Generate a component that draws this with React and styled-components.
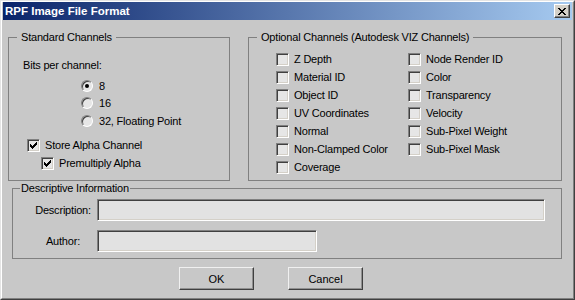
import React from "react";
import styled, { createGlobalStyle } from "styled-components";

const GlobalStyle = createGlobalStyle`
  html, body {
    margin: 0;
    padding: 0;
    background: #c8c8c8;
  }
  body {
    font-family: "Liberation Sans", Arial, sans-serif;
    font-size: 11px;
    letter-spacing: -0.2px;
    color: #000;
  }
`;

const standardRadios = [
  { id: "8", label: "8", checked: true, top: 3, height: 17 },
  { id: "16", label: "16", checked: false, top: 0, height: 18 },
  { id: "32", label: "32, Floating Point", checked: false, top: 0, height: 18 },
];

const optionalChannels = [
  "Z Depth",
  "Material ID",
  "Object ID",
  "UV Coordinates",
  "Normal",
  "Non-Clamped Color",
  "Coverage",
  "Node Render ID",
  "Color",
  "Transparency",
  "Velocity",
  "Sub-Pixel Weight",
  "Sub-Pixel Mask",
];

const Window = styled.div`
  width: 575px;
  height: 300px;
  box-sizing: border-box;
  border: 1px solid;
  border-color: #e4e4e4 #404040 #404040 #e4e4e4;
  background: #c8c8c8;
`;

const Frame = styled.div`
  height: 100%;
  box-sizing: border-box;
  border: 1px solid;
  border-color: #ffffff #808080 #808080 #ffffff;
  padding: 0 1px 1px 1px;
  display: flex;
  flex-direction: column;
`;

const TitleBar = styled.div`
  height: 18px;
  display: flex;
  align-items: center;
  justify-content: space-between;
  padding: 0 2px 0 2px;
  background: linear-gradient(90deg, #0a246a 0%, #a6caf0 100%);
`;

const Title = styled.span`
  color: #fff;
  font-weight: bold;
  font-size: 11.5px;
  letter-spacing: 0;
  line-height: 18px;
`;

const CloseButton = styled.button`
  width: 16px;
  height: 14px;
  padding: 0;
  margin: 0;
  box-sizing: border-box;
  border: 1px solid;
  border-color: #ffffff #404040 #404040 #ffffff;
  box-shadow: inset -1px -1px 0 #808080;
  background: #d4d0c8;
  display: flex;
  align-items: center;
  justify-content: center;
`;

const Body = styled.div`
  display: flex;
  flex-direction: column;
`;

const TopRow = styled.div`
  display: flex;
  gap: 18px;
  margin: 11px 0 0 5px;
`;

const Group = styled.fieldset`
  box-sizing: border-box;
  width: ${(p) => p.$w}px;
  height: ${(p) => p.$h}px;
  margin: 0;
  padding: 0;
  border: 1px solid #808080;
  min-width: 0;
`;

const Legend = styled.legend`
  margin-left: ${(p) => p.$ml}px;
  padding: 0 ${(p) => p.$pad}px;
  line-height: 13px;
  height: 13px;
`;

const Row = styled.div`
  display: flex;
  align-items: center;
  height: ${(p) => p.$h || 18}px;
  margin-top: ${(p) => p.$mt || 0}px;
  padding-left: ${(p) => p.$pl || 0}px;
  gap: ${(p) => p.$gap || 5}px;
`;

const Box = styled.span`
  width: 13px;
  height: 13px;
  box-sizing: border-box;
  border: 1px solid;
  border-color: #808080 #ffffff #ffffff #808080;
  box-shadow: inset 1px 1px 0 #404040, inset -1px -1px 0 #d4d0c8;
  background: #e6e6e6;
  display: flex;
  align-items: center;
  justify-content: center;
  flex: none;
`;

const Radio = styled.span`
  width: 12px;
  height: 12px;
  box-sizing: border-box;
  border-radius: 50%;
  border: 1px solid;
  border-color: #808080 #ffffff #ffffff #808080;
  box-shadow: inset 1px 1px 0 #404040;
  background: #e6e6e6;
  display: flex;
  align-items: center;
  justify-content: center;
  flex: none;
  &::after {
    content: "";
    width: 4px;
    height: 4px;
    border-radius: 50%;
    background: ${(p) => (p.$on ? "#000" : "transparent")};
  }
`;

const ChannelGrid = styled.div`
  display: grid;
  grid-template-columns: 132px 132px;
  grid-template-rows: repeat(7, 18px);
  grid-auto-flow: column;
  margin-top: 6px;
  padding-left: 27px;
`;

const DescGroup = styled(Group)`
  margin: 1px 0 0 9px;
`;

const FieldRow = styled.div`
  display: flex;
  align-items: center;
  height: 22px;
  margin-top: ${(p) => p.$mt}px;
  padding-left: 20px;
`;

const FieldLabel = styled.span`
  width: 60px;
  text-align: center;
  margin-right: 4px;
`;

const Input = styled.input`
  width: ${(p) => p.$w}px;
  height: 22px;
  box-sizing: border-box;
  margin: 0;
  border: 1px solid;
  border-color: #808080 #ffffff #ffffff #808080;
  box-shadow: inset 1px 1px 0 #404040, inset -1px -1px 0 #d4d0c8;
  background: #e2e2e2;
  font: inherit;
  padding: 0 3px;
  outline: none;
`;

const ButtonRow = styled.div`
  display: flex;
  gap: 34px;
  margin-top: 8px;
  padding-left: 176px;
`;

const Button = styled.button`
  width: 75px;
  height: 23px;
  box-sizing: border-box;
  margin: 0;
  border: 1px solid;
  border-color: #f0f0f0 #404040 #404040 #f0f0f0;
  box-shadow: inset -1px -1px 0 #909090;
  background: #c8c8c8;
  font: inherit;
  color: #000;
  padding: 0;
`;

const Check = () => (
  <svg width="7" height="7" viewBox="0 0 7 7" shapeRendering="crispEdges">
    <rect x="0" y="2" width="1" height="3" fill="#000" />
    <rect x="1" y="3" width="1" height="3" fill="#000" />
    <rect x="2" y="4" width="1" height="3" fill="#000" />
    <rect x="3" y="3" width="1" height="3" fill="#000" />
    <rect x="4" y="2" width="1" height="3" fill="#000" />
    <rect x="5" y="1" width="1" height="3" fill="#000" />
    <rect x="6" y="0" width="1" height="3" fill="#000" />
  </svg>
);

const CloseGlyph = () => (
  <svg width="8" height="7" viewBox="0 0 8 7" shapeRendering="crispEdges">
    <path
      d="M0 0h2v1H0zM6 0h2v1H6zM1 1h2v1H1zM5 1h2v1H5zM2 2h4v1H2zM3 3h2v1H3zM2 4h4v1H2zM1 5h2v1H1zM5 5h2v1H5zM0 6h2v1H0zM6 6h2v1H6z"
      fill="#000"
    />
  </svg>
);

const CheckItem = ({ label, checked }) => (
  <Row>
    <Box>{checked && <Check />}</Box>
    <span>{label}</span>
  </Row>
);

export default function App() {
  return (
    <>
      <GlobalStyle />
      <Window>
        <Frame>
          <TitleBar>
            <Title>RPF Image File Format</Title>
            <CloseButton aria-label="Close">
              <CloseGlyph />
            </CloseButton>
          </TitleBar>
          <Body>
            <TopRow>
              <Group $w={222} $h={150}>
                <Legend $ml={8} $pad={4}>Standard Channels</Legend>
                <Row $mt={12} $pl={14}>
                  Bits per channel:
                </Row>
                {standardRadios.map((r) => (
                  <Row key={r.id} $mt={r.top} $h={r.height} $pl={72} $gap={6}>
                    <Radio $on={r.checked} />
                    <span>{r.label}</span>
                  </Row>
                ))}
                <Row $mt={6} $pl={18}>
                  <Box>
                    <Check />
                  </Box>
                  <span>Store Alpha Channel</span>
                </Row>
                <Row $pl={32}>
                  <Box>
                    <Check />
                  </Box>
                  <span>Premultiply Alpha</span>
                </Row>
              </Group>
              <Group $w={314} $h={150}>
                <Legend $ml={8} $pad={4}>
                  Optional Channels (Autodesk VIZ Channels)
                </Legend>
                <ChannelGrid>
                  {optionalChannels.map((c) => (
                    <CheckItem key={c} label={c} />
                  ))}
                </ChannelGrid>
              </Group>
            </TopRow>
            <DescGroup $w={550} $h={77}>
              <Legend $ml={7} $pad={1}>Descriptive Information</Legend>
              <FieldRow $mt={4}>
                <FieldLabel>Description:</FieldLabel>
                <Input $w={448} />
              </FieldRow>
              <FieldRow $mt={9}>
                <FieldLabel>Author:</FieldLabel>
                <Input $w={220} />
              </FieldRow>
            </DescGroup>
            <ButtonRow>
              <Button>OK</Button>
              <Button>Cancel</Button>
            </ButtonRow>
          </Body>
        </Frame>
      </Window>
    </>
  );
}
